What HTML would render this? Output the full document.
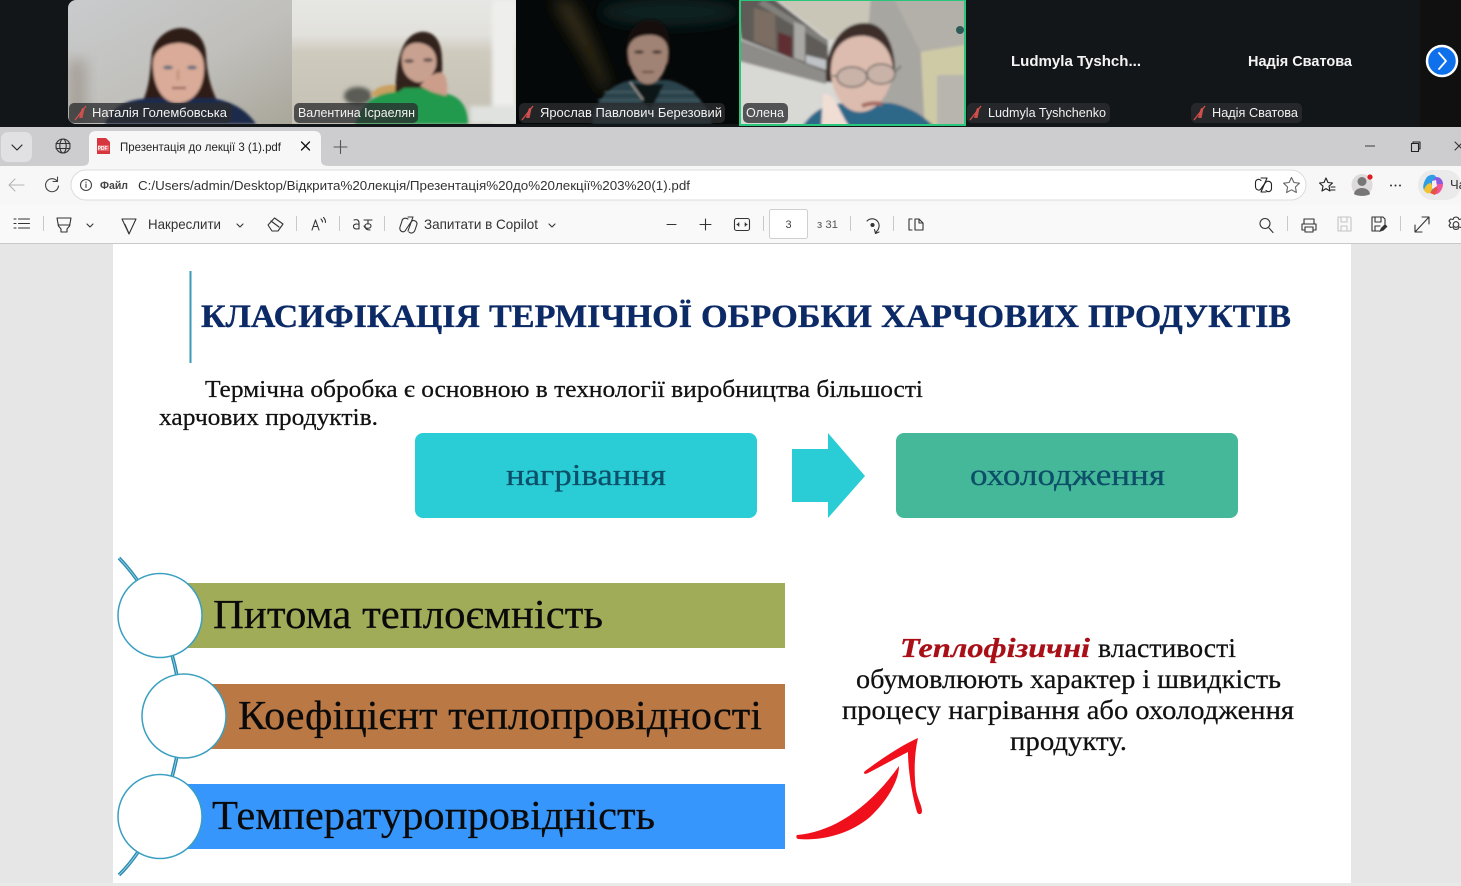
<!DOCTYPE html>
<html lang="uk"><head><meta charset="utf-8"><title>Презентація</title>
<style>
html,body{margin:0;padding:0;background:#e6e6e6;width:1461px;height:886px;overflow:hidden}
svg{display:block}
.s{font-family:"Liberation Sans",sans-serif}
.r{font-family:"Liberation Serif",serif}
.lab{font-family:"Liberation Sans",sans-serif;font-size:13px;fill:#f2f2f2}
.ui{font-family:"Liberation Sans",sans-serif;font-size:13px}
.ic{fill:none;stroke-width:1.1;stroke-linecap:round;stroke-linejoin:round}
.k{stroke:#111;stroke-width:.25}
</style></head><body>
<svg width="1461" height="886" viewBox="0 0 1461 886" xmlns="http://www.w3.org/2000/svg">
<defs>
<filter id="b2" x="-30%" y="-30%" width="160%" height="160%"><feGaussianBlur stdDeviation="2"/></filter>
<filter id="b1" x="-30%" y="-30%" width="160%" height="160%"><feGaussianBlur stdDeviation="1.3"/></filter>
<filter id="b6" x="-60%" y="-60%" width="220%" height="220%"><feGaussianBlur stdDeviation="7"/></filter>
<linearGradient id="g1" x1="0" y1="0" x2="1" y2="1"><stop offset="0" stop-color="#c9cbcd"/><stop offset=".55" stop-color="#c0bfbb"/><stop offset="1" stop-color="#a9a69a"/></linearGradient>
<linearGradient id="g2" x1="0" y1="0" x2="0" y2="1"><stop offset="0" stop-color="#e6e7e4"/><stop offset=".28" stop-color="#e2e1dc"/><stop offset=".42" stop-color="#cfcabe"/><stop offset="1" stop-color="#c4c0b4"/></linearGradient>
<clipPath id="c1"><path d="M68 8a8 8 0 0 1 8-8H292V124H76a8 8 0 0 1-8-8z"/></clipPath>
<clipPath id="c2"><rect x="292" y="0" width="224" height="124"/></clipPath>
<clipPath id="c3"><rect x="516" y="0" width="223" height="124"/></clipPath>
<clipPath id="c4"><rect x="741" y="0" width="223" height="124"/></clipPath>
<g id="mic"><path d="M5 13 L8 3 L10.500 3.500 L8.500 13z" fill="#c9504c"/><path d="M1 15 L12 1" stroke="#d8504c" stroke-width="1.3"/></g>
</defs>

<!-- top bar -->
<rect x="0" y="0" width="1461" height="127" fill="#131619"/>
<rect x="1420" y="0" width="41" height="127" fill="#111010"/>

<!-- tile 1 -->
<g clip-path="url(#c1)">
<rect x="68" y="0" width="224" height="124" fill="url(#g1)"/>
<rect x="68" y="60" width="18" height="64" fill="#a59f97" filter="url(#b6)"/>
<g filter="url(#b1)">
<path d="M140 106 C150 90 150 70 152 52 C156 36 170 28 181 28 C194 28 205 38 206 54 C207 76 212 92 220 106z" fill="#2d1b19"/>
<path d="M105 124 C112 106 125 100 150 98 L212 98 C235 102 248 112 256 124z" fill="#1f2c4c"/>
<path d="M153 64 C153 48 168 43 180 43 C195 44 204 52 204 68 C204 86 196 102 178 103 C162 103 153 86 153 64z" fill="#d9ab98"/>
<ellipse cx="168" cy="67.500" rx="5" ry="2" fill="#68717e"/><ellipse cx="192" cy="67.500" rx="5" ry="2" fill="#68717e"/>
<path d="M172 88h14" stroke="#8e5a55" stroke-width="2"/>
<path d="M178 70v10" stroke="#c79582" stroke-width="3"/>
</g>
</g>

<!-- tile 2 -->
<g clip-path="url(#c2)">
<rect x="292" y="0" width="224" height="124" fill="url(#g2)"/>
<rect x="492" y="0" width="24" height="124" fill="#eeeeec" filter="url(#b2)"/>
<ellipse cx="358" cy="96" rx="14" ry="9" fill="#5a5b54" filter="url(#b2)"/>
<rect x="470" y="106" width="46" height="18" fill="#dfe2df" filter="url(#b2)"/>
<g filter="url(#b1)">
<path d="M370 96 C374 88 384 84 396 85 L396 96z" fill="#c9a060"/>
<path d="M395 102 C396 70 398 36 420 32 C436 30 442 44 442 60 C443 72 440 90 440 104z" fill="#33241f"/>
<path d="M355 124 C362 100 380 92 398 92 L404 88 L430 88 L448 94 C464 98 468 112 468 124z" fill="#209a4e"/>
<path d="M402 56 C404 45 412 42 420 43 C432 45 438 54 436 66 C432 80 420 86 412 80 C404 76 401 66 402 56z" fill="#c9a190"/>
<path d="M420 86 C428 76 438 70 444 74 C448 82 448 90 446 96 L432 92z" fill="#cc9d8a"/>
<ellipse cx="409" cy="61" rx="5" ry="2" fill="#6a5754"/><ellipse cx="428" cy="60" rx="5" ry="2" fill="#6a5754"/>
</g>
</g>

<!-- tile 3 -->
<g clip-path="url(#c3)">
<rect x="516" y="0" width="224" height="124" fill="#050808"/>
<ellipse cx="670" cy="12" rx="70" ry="14" fill="#082322" filter="url(#b6)"/>
<path d="M552 0 L572 0 C590 30 600 60 610 85 L602 92 C590 60 565 30 552 0z" fill="#332a12" filter="url(#b6)"/>
<g filter="url(#b1)">
<path d="M592 124 C596 96 612 84 632 80 L668 80 C688 84 706 100 712 124z" fill="#2b424c"/>
<path d="M598 100 L700 100M594 108L706 108M592 116L710 116M604 92L694 92" stroke="#486469" stroke-width="1.5"/>
<path d="M626 66 C622 36 634 20 650 20 C666 20 672 32 670 64z" fill="#15100f"/>
<path d="M628 50 C630 38 640 35 650 35 C660 35 668 40 668 52 C668 68 660 84 648 84 C636 84 628 68 628 50z" fill="#a18374"/>
<ellipse cx="639" cy="52" rx="5" ry="1.800" fill="#4c3a36"/><ellipse cx="657" cy="52" rx="5" ry="1.800" fill="#4c3a36"/>
<path d="M642 72h12" stroke="#6a4540" stroke-width="2"/>
<path d="M630 84 L642 102 L650 110 L656 100 L664 84z" fill="#0f1416"/>
<path d="M630 82 L643 100" stroke="#b9b8b4" stroke-width="1.300"/>
</g>
</g>

<!-- tile 4 -->
<g clip-path="url(#c4)">
<g filter="url(#b1)">
<rect x="735" y="-5" width="235" height="135" fill="#d8d8d4"/>
<path d="M771 -5 L871 -5 L871 36 L830 40z" fill="#c9c6b8"/>
<path d="M871 -5 L970 -5 L970 46 L921 52z" fill="#b3b0a9"/>
<path d="M871 -5 L892 -5 L921 52 L925 130 L860 130z" fill="#a8a6a1"/>
<path d="M921 52 L970 44 L970 130 L925 130z" fill="#cfcaa6"/>
<rect x="937" y="75" width="28" height="55" fill="#b7b5ad"/>
<path d="M735 -5h34l59 46v32l-87-34z" fill="#5f5c58"/>
<path d="M764 0l64 40v6l-70-42z" fill="#82807b"/>
<path d="M735 38 L826 72 L826 84 L735 60z" fill="#8e8c88"/>
<path d="M754 8 L775 14 L776 50 L754 41z" fill="#7c6d62"/>
<path d="M778 32 L792 37 L792 58 L778 52z" fill="#5f2d30"/>
<path d="M794 22 L805 26 L805 62 L794 58z" fill="#a9a8a4"/>
<path d="M806 55 L826 60 L826 70 L806 63z" fill="#bfc2c6"/>
<path d="M800 130 C812 110 826 103 850 103 L890 103 C905 105 925 115 937 130z" fill="#2f6788"/>
<path d="M826 82 C824 52 838 23 865 23 C885 23 895 45 895 72 L890 84z" fill="#3c2f2b"/>
<path d="M831 68 C832 46 846 35 865 36 C882 38 892 52 893 70 C892 88 880 112 860 112 C842 112 830 90 831 68z" fill="#dcbcae"/>
<path d="M823 94 C836 92 838 112 852 130 L821 130z" fill="#f0ded5"/>
<ellipse cx="852" cy="77" rx="15" ry="10" fill="#c9b2a8" stroke="#6a6765" stroke-width="1.500"/>
<ellipse cx="881" cy="74" rx="14" ry="10" fill="#c9b2a8" stroke="#6a6765" stroke-width="1.500"/>
<path d="M832 76l6 0M895 72l6-6" stroke="#6a6765" stroke-width="1.500"/>
<path d="M862 106c7-3 14-3 20-2" stroke="#a56a60" stroke-width="4" fill="none"/>
</g>
<circle cx="960" cy="30" r="4" fill="#2f5a58"/>
</g>
<rect x="740" y="0" width="225" height="125" fill="none" stroke="#28c77c" stroke-width="2"/>

<!-- name labels -->
<rect x="69" y="103" width="163" height="20" rx="5" fill="#2b2d2f" opacity=".78"/>
<rect x="294" y="103" width="124" height="20" rx="5" fill="#2b2d2f" opacity=".78"/>
<rect x="519" y="103" width="206" height="20" rx="5" fill="#2b2d2f" opacity=".78"/>
<rect x="743" y="103" width="45" height="20" rx="5" fill="#2b2d2f" opacity=".78"/>
<rect x="967" y="103" width="143" height="20" rx="5" fill="#25272a"/>
<rect x="1191" y="103" width="111" height="20" rx="5" fill="#25272a"/>
<use href="#mic" x="74" y="105"/><use href="#mic" x="521" y="105"/><use href="#mic" x="969" y="105"/><use href="#mic" x="1193" y="105"/>
<text class="lab" x="92" y="117" textLength="135" lengthAdjust="spacingAndGlyphs">Наталія Голембовська</text>
<text class="lab" x="298" y="117" textLength="117" lengthAdjust="spacingAndGlyphs">Валентина Ісраелян</text>
<text class="lab" x="540" y="117" textLength="182" lengthAdjust="spacingAndGlyphs">Ярослав Павлович Березовий</text>
<text class="lab" x="746" y="117" textLength="38" lengthAdjust="spacingAndGlyphs">Олена</text>
<text class="lab" x="988" y="117" textLength="118" lengthAdjust="spacingAndGlyphs">Ludmyla Tyshchenko</text>
<text class="lab" x="1212" y="117" textLength="86" lengthAdjust="spacingAndGlyphs">Надія Сватова</text>
<text class="s" x="1011" y="66" font-size="15" font-weight="700" fill="#f4f4f4" textLength="130" lengthAdjust="spacingAndGlyphs">Ludmyla  Tyshch...</text>
<text class="s" x="1248" y="66" font-size="15" font-weight="700" fill="#f4f4f4" textLength="104" lengthAdjust="spacingAndGlyphs">Надія Сватова</text>
<circle cx="1442" cy="61" r="15" fill="#0e71eb" stroke="#fff" stroke-width="2.500"/>
<path d="M1439 53l7 8-7 8" fill="none" stroke="#fff" stroke-width="1.800" stroke-linecap="round" stroke-linejoin="round"/>

<!-- browser chrome -->
<rect x="0" y="127" width="1461" height="39" fill="#cdccce"/>
<rect x="1" y="132" width="31" height="30" rx="7" fill="#e1e0e2"/>
<path class="ic" d="M12 145l5 5 5-5" stroke="#222"/>
<g class="ic" stroke="#333"><circle cx="63" cy="146" r="7"/><ellipse cx="63" cy="146" rx="3.200" ry="7"/><path d="M56 143.500h14M56 148.500h14"/></g>
<path d="M81 166 C87 166 89 164 89 160 L89 138 Q89 131 96 131 L314 131 Q321 131 321 138 L321 160 C321 164 323 166 329 166z" fill="#f7f7f7"/>
<path d="M97 138h9l4 4v12h-13z" fill="#d8363e"/>
<rect x="98" y="145" width="11" height="6" fill="#fff" opacity=".25"/>
<text x="97.600" y="150" font-family="Liberation Sans,sans-serif" font-size="5" font-weight="700" fill="#fff">PDF</text>
<text class="ui" x="120" y="151" style="font-size:12px" fill="#222" textLength="161" lengthAdjust="spacingAndGlyphs">Презентація до лекції 3 (1).pdf</text>
<path class="ic" d="M301.500 142l8 8M309.500 142l-8 8" stroke="#111" style="stroke-width:1.300"/>
<path class="ic" d="M334 147h13M340.500 140.500v13" stroke="#555"/>
<path d="M1365 146h10" stroke="#555" stroke-width="1.200"/>
<path class="ic" d="M1411.500 143.500h7v8h-7zM1413 143.500v-1.500h7v7h-1.500" stroke="#222"/>
<path class="ic" d="M1455 142l8 8M1463 142l-8 8" stroke="#333"/>

<rect x="0" y="166" width="1461" height="39" fill="#f7f7f7"/>
<rect x="71" y="170" width="1235" height="30" rx="15" fill="#fff" stroke="#dcdcdc"/>
<path class="ic" d="M24 185H9M15 179l-6 6 6 6" stroke="#b5b5b5"/>
<path class="ic" d="M57 181a6.500 6.500 0 1 0 1.500 5M57.500 177v4.500H53" stroke="#444"/>
<circle class="ic" cx="86" cy="185" r="5.500" stroke="#444"/><path class="ic" d="M86 184v3.500M86 182v.4" stroke="#444"/>
<text class="ui" x="100" y="189" style="font-size:11px;font-weight:700" fill="#444" textLength="28" lengthAdjust="spacingAndGlyphs">Файл</text>
<text class="ui" x="138" y="190" fill="#333" textLength="552" lengthAdjust="spacingAndGlyphs">C:/Users/admin/Desktop/Відкрита%20лекція/Презентація%20до%20лекції%203%20(1).pdf</text>
<g class="ic" stroke="#222"><path d="M1261 180.500c-2.500-2.500-5.500-.5-5.500 2v4c0 3 3 4.500 5 3l5-7c2-2.500 6-1 6 2v4c0 2.500-3 4.500-5.500 2"/><path d="M1261 178h6l-6 14h5"/></g>
<path class="ic" d="M1291.500 177.500l2.400 5 5.500.7-4 3.800 1 5.500-4.900-2.700-4.900 2.700 1-5.500-4-3.800 5.500-.7z" stroke="#666"/>
<path class="ic" d="M1326 178l2 4.500 4.500.5-3.500 3.200 1 4.800-4-2.400-4 2.400 1-4.800-3.500-3.200 4.500-.5zM1331 187h4M1331 190h4" stroke="#222"/>
<ellipse cx="1362" cy="185" rx="10.500" ry="11" fill="#dcdadb"/>
<circle cx="1362" cy="181.500" r="4.500" fill="#777"/><path d="M1354 194c1-8 15-8 16 0-3 2.500-13 2.500-16 0z" fill="#777"/>
<circle cx="1370" cy="177" r="2.600" fill="#e01b24"/>
<circle cx="1391" cy="185.500" r="1" fill="#333"/><circle cx="1395.500" cy="185.500" r="1" fill="#333"/><circle cx="1400" cy="185.500" r="1" fill="#333"/>
<rect x="1418" y="170" width="43" height="30" rx="15" fill="#eaeaea"/>
<path d="M1427 177c3-3 8-3 9 0l-3 13c-1 3-7 3-9 0-2-3 0-9 3-13z" fill="#2e9fe6"/>
<path d="M1436 177c5 0 7 4 7 7l-6 2-5-5z" fill="#8a5be0"/>
<path d="M1443 184c0 5-4 11-8 10l-2-3 4-7z" fill="#f0569a"/>
<path d="M1424 190c1-4 4-7 7-7l2 5-3 5c-3 1-5-1-6-3z" fill="#f2c230"/>
<path d="M1430 193l5-6 3 2-3 6z" fill="#e8523f"/>
<path d="M1432 181l4-1 1 6-5 3z" fill="#eef0f5"/>
<text class="ui" x="1450" y="189" fill="#333">Ча</text>

<rect x="0" y="205" width="1461" height="38" fill="#f9f9f9"/>
<rect x="0" y="243" width="1461" height="1" fill="#c9c9c9"/>
<rect x="0" y="244" width="113" height="639" fill="#e6e6e6"/>
<g stroke="#c9c9c9"><path d="M43.500 216v15M296.500 216v15M339.500 216v15M384.500 216v15M763.500 216v15M850.500 216v15M893.500 216v15M1287.500 216v15M1400.500 216v15"/></g>
<g class="ic" stroke="#333">
<path d="M14 219h2M18.500 219h11M14 223.500h2M18.500 223.500h11M14 228h2M18.500 228h11"/>
<path d="M57 218h14l-1.500 8-2.500 3v3h-6v-3l-2.500-3zM58 225h12"/>
<path d="M87 224l3 3 3-3"/>
<path d="M122 219h14l-7 15zM125 224.500l4 9"/>
<path d="M237 224l3 3 3-3"/>
<path d="M268 225l6.500-7 8.500 6-5 7h-6zM271 221l8 6"/>
<path d="M312 230l3.500-10 3.500 10M313.500 226.500h4M321 219c1 1 1.500 2 1.500 3M323.500 217.500c1.500 1.500 2 3 2 5"/>
<path d="M359 228.500c-2.500 1-5.500.5-5.500-2s3-3 5.500-2v4.500M354 220c3-1 5 0 5 3v1M364 220h8M368 220v4M364 226c1 3 7 3 7 0s-6-3-6 0 2 4 5 4"/>
<path d="M408 219c-3-2-6 0-6 2l-2 6c-1 4 3 6 5 4l6-9c2-3 6-1 6 2l-2 6c-1 3-4 4-6 2M408 217h5l-5 14"/>
<path d="M549 224l3 3 3-3"/>
<path d="M667 224.500h9M700 224.500h11M705.500 219v11"/>
<rect x="734.500" y="218.500" width="15" height="12" rx="2"/><path d="M737 224.500h2M745 224.500h2M739 223l-1.500 1.500 1.500 1.500M745 223l1.500 1.500-1.500 1.500"/>
<path d="M867 221a7 7 0 0 1 11 1c2 3 1 7-1 9l-1.500 2M874.500 229.500l1 4 3.500-1.500"/><circle cx="872.500" cy="225" r="1.500" fill="#333"/>
<path d="M912 219h-3v11h3M915 219h4l4 4v7h-8zM919 219v4h4"/>
<circle cx="1265" cy="223.500" r="5"/><path d="M1269 228l4 4.500"/>
<path d="M1304 224v-5h10v5M1304 230h-2v-6h14v6h-2M1305 227h8v5h-8z"/>
</g>
<rect x="769.500" y="209.500" width="38" height="29" rx="2" fill="#fff" stroke="#cfcfcf"/>
<text class="ui" x="785.500" y="228" style="font-size:11px" fill="#444">3</text>
<text class="ui" x="817" y="228" style="font-size:11px" fill="#555" textLength="21" lengthAdjust="spacingAndGlyphs">з 31</text>
<text class="ui" x="148" y="229" style="font-size:14px" fill="#333" textLength="73" lengthAdjust="spacingAndGlyphs">Накреслити</text>
<text class="ui" x="424" y="229" style="font-size:14px" fill="#333" textLength="114" lengthAdjust="spacingAndGlyphs">Запитати в Copilot</text>
<g class="ic" stroke="#c4c4c4"><path d="M1338 217h12l1 1v13h-13zM1341 217v5h6v-5M1341 231v-5h6v5"/></g>
<g class="ic" stroke="#333"><path d="M1372 217h11l2 2v5M1372 217v14h7M1375 217v5h6v-5M1375 231v-5h5"/></g>
<path d="M1379 232l2-4 4-4 2.500 2.500-4 4z" fill="#333"/>
<g class="ic" stroke="#333"><path d="M1415 232l14-15M1422 217h7v7M1415 225v7h7"/>
<circle cx="1456" cy="224.500" r="2.800"/><path d="M1456 217l2 .5 1 2 2.500-.5 1.500 2-1.500 2 1.500 2.500-1.500 2-2.500-.5-1 2-2 .5-2-.5-1-2-2.500.5-1.500-2 1.500-2.500-1.500-2 1.500-2 2.500.5 1-2z"/></g>

<!-- slide -->
<rect x="1351" y="244" width="110" height="639" fill="#e6e6e6"/>
<rect x="113" y="244" width="1238" height="639" fill="#fff"/>
<rect x="0" y="883" width="1461" height="3" fill="#e9e9e9"/>
<rect x="189.500" y="271" width="2" height="92" fill="#3a9db5"/>
<g class="r" font-size="33" font-weight="700" fill="#0c2a66" stroke="#0c2a66" stroke-width=".35">
<text x="201" y="327" textLength="279" lengthAdjust="spacingAndGlyphs">КЛАСИФІКАЦІЯ</text>
<text x="489" y="327" textLength="203" lengthAdjust="spacingAndGlyphs">ТЕРМІЧНОЇ</text>
<text x="701" y="327" textLength="171" lengthAdjust="spacingAndGlyphs">ОБРОБКИ</text>
<text x="881" y="327" textLength="198" lengthAdjust="spacingAndGlyphs">ХАРЧОВИХ</text>
<text x="1088" y="327" textLength="203" lengthAdjust="spacingAndGlyphs">ПРОДУКТІВ</text>
</g>
<text class="r k" x="205" y="397" font-size="24" fill="#111" textLength="718" lengthAdjust="spacingAndGlyphs">Термічна обробка є основною в технології виробництва більшості</text>
<text class="r k" x="159" y="425" font-size="24" fill="#111" textLength="219" lengthAdjust="spacingAndGlyphs">харчових продуктів.</text>

<rect x="415" y="433" width="342" height="85" rx="8" fill="#2accd5"/>
<text class="r" x="506" y="485" font-size="31" fill="#0c4f68" stroke="#0c4f68" stroke-width=".25" textLength="160" lengthAdjust="spacingAndGlyphs">нагрівання</text>
<path d="M792 449H828V433L865 476 828 518V502H792z" fill="#2accd5"/>
<rect x="896" y="433" width="342" height="85" rx="8" fill="#45b89a"/>
<text class="r" x="970" y="485" font-size="31" fill="#0c4f68" stroke="#0c4f68" stroke-width=".25" textLength="195" lengthAdjust="spacingAndGlyphs">охолодження</text>

<rect x="170" y="583" width="615" height="65" fill="#a0ac58"/>
<rect x="194" y="684" width="591" height="65" fill="#b97844"/>
<rect x="170" y="784" width="615" height="65" fill="#3796fc"/>
<path d="M119 558 C150 590 180 650 181 716 C181 770 155 840 119 875" fill="none" stroke="#2a8db2" stroke-width="3.600"/>
<path d="M119 558 C150 590 180 650 181 716 C181 770 155 840 119 875" fill="none" stroke="#a5d6e6" stroke-width=".8"/>
<g fill="#fff" stroke="#3a9fc0" stroke-width="1.500">
<circle cx="160" cy="615.500" r="42"/>
<circle cx="184" cy="716" r="42"/>
<circle cx="160" cy="816.500" r="42"/>
</g>
<text class="r k" x="213" y="628" font-size="41" fill="#0a0a0a" textLength="390" lengthAdjust="spacingAndGlyphs">Питома теплоємність</text>
<text class="r k" x="238" y="729" font-size="41" fill="#0a0a0a" textLength="524" lengthAdjust="spacingAndGlyphs">Коефіцієнт теплопровідності</text>
<text class="r k" x="212" y="829" font-size="41" fill="#0a0a0a" textLength="443" lengthAdjust="spacingAndGlyphs">Температуропровідність</text>

<text class="r" x="900" y="657" font-size="27" font-weight="700" font-style="italic" fill="#a80f17" stroke="#a80f17" stroke-width=".3" textLength="190" lengthAdjust="spacingAndGlyphs">Теплофізичні</text>
<text class="r k" x="1098" y="657" font-size="27" fill="#111" textLength="138" lengthAdjust="spacingAndGlyphs">властивості</text>
<text class="r k" x="856" y="688" font-size="27" fill="#111" textLength="425" lengthAdjust="spacingAndGlyphs">обумовлюють характер і швидкість</text>
<text class="r k" x="842" y="719" font-size="27" fill="#111" textLength="452" lengthAdjust="spacingAndGlyphs">процесу нагрівання або охолодження</text>
<text class="r k" x="1010" y="750" font-size="27" fill="#111" textLength="117" lengthAdjust="spacingAndGlyphs">продукту.</text>

<path d="M797 835 C830 832 866 812 899 766 C899 780 888 800 870 817 C850 834 822 841 798 839 C796 838 796 836 797 835z" fill="#f0101c"/>
<path d="M865 771 C880 760 900 746 918 738 C914 755 914 775 916 790 C918 800 922 806 922 811 C922 815 918 815 917 812 C912 795 908 770 908 752 C896 758 880 767 868 773 C864 775 863 773 865 771z" fill="#f0101c"/>
</svg>
</body></html>
